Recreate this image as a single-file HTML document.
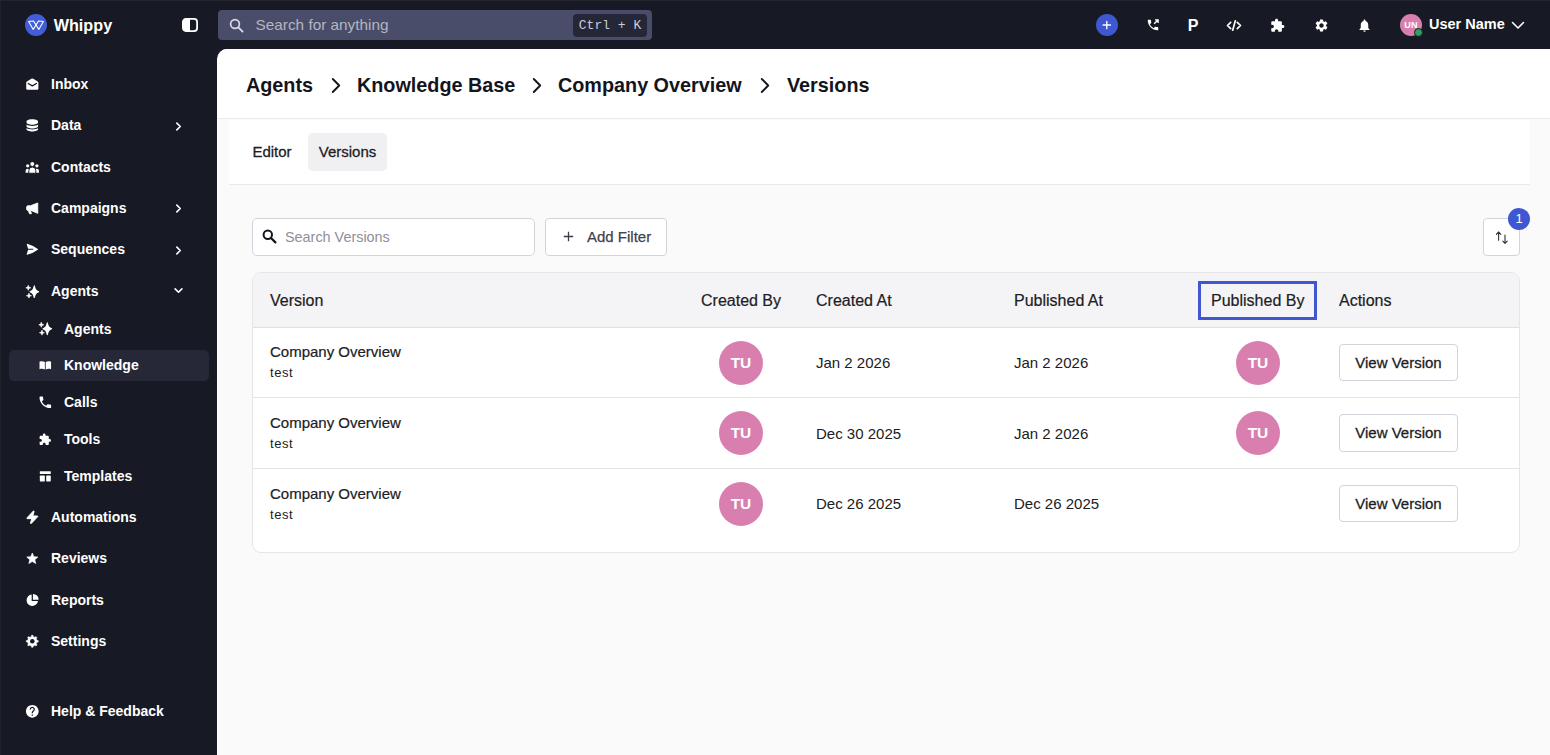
<!DOCTYPE html>
<html lang="en">
<head>
<meta charset="utf-8">
<title>Whippy - Versions</title>
<style>
*{box-sizing:border-box;margin:0;padding:0}
html,body{width:1550px;height:755px;overflow:hidden}
body{background:#171a24;font-family:"Liberation Sans",sans-serif;color:#1c2024;position:relative;-webkit-font-smoothing:antialiased}
.abs{position:absolute}
svg{display:block}
/* sidebar */
.nav{position:absolute;left:0;height:30px;display:flex;align-items:center;color:#fff;font-weight:700;font-size:14px;white-space:nowrap}
.nav .ic{position:absolute;left:25.3px;top:7.900px;width:14.600px;height:14.600px}
.nav .tx{position:absolute;left:51px;top:0;line-height:30px}
.nav.sub .ic{left:38.450px}
.nav.sub .tx{left:64px}
.nav .chev{position:absolute;left:172.800px;top:10.300px;width:11px;height:11px}
/* main */
#main{position:absolute;left:217px;top:49px;width:1333px;height:706px;background:#fafafa;border-left:1px solid #fff;border-top-left-radius:10px;overflow:hidden}
#crumbs{position:absolute;left:0;top:0;width:1332px;height:70px;background:#fff;border-bottom:1px solid #e9e9ec}
.crumb{position:absolute;top:22px;font-size:19.8px;font-weight:700;line-height:28px;color:#14151c;white-space:nowrap}
.csep{position:absolute;top:27.600px;width:12px;height:17px}
#tabs{position:absolute;left:11px;top:71px;width:1301px;height:65px;background:#fff;border-bottom:1px solid #e9e9ec}
.tab{position:absolute;top:13px;height:38px;line-height:38px;font-size:15px;font-weight:400;-webkit-text-stroke:0.280px #1c2024;color:#1c2024;text-align:center;border-radius:5px;white-space:nowrap}
.inp{position:absolute;background:#fff;border:1px solid #d3d4db;border-radius:5px}
.btn{position:absolute;background:#fff;border:1px solid #d3d4db;border-radius:4px;font-weight:400;font-size:15px;-webkit-text-stroke:0.280px #1c2024;color:#1c2024;white-space:nowrap}
#table{position:absolute;left:34px;top:223px;width:1268px;height:281px;background:#fff;border:1px solid #e6e6ea;border-radius:9px;overflow:hidden}
#thead{position:absolute;left:0;top:0;width:1266px;height:55px;background:#f4f4f6;border-bottom:1px solid #dfe0e5}
.th{position:absolute;top:1px;line-height:54px;font-size:16px;font-weight:400;color:#1c2024;white-space:nowrap;-webkit-text-stroke:0.200px #1c2024}
.row{position:absolute;left:0;width:1266px;height:70px}
.sep{position:absolute;left:0;width:1266px;height:1px;background:#e3e3e8}
.t1{position:absolute;left:17px;top:14px;font-size:15px;line-height:20px;color:#1c2024;white-space:nowrap;-webkit-text-stroke:0.200px #1c2024}
.t2{position:absolute;left:17px;top:36px;font-size:13px;line-height:18px;color:#1c2024;white-space:nowrap;letter-spacing:0.550px}
.av{position:absolute;top:12.600px;width:44px;height:44px;border-radius:50%;background:#d97fb0;color:#fff;font-weight:700;font-size:15.5px;line-height:44px;text-align:center}
.dt{position:absolute;top:24px;font-size:15px;line-height:22px;color:#1c2024;white-space:nowrap}
.vv{left:1086px;top:15.700px;width:119px;height:37.400px;line-height:35.400px;text-align:center}
</style>
</head>
<body>
<!-- ===== top bar ===== -->
<div class="abs" style="left:0;top:0;width:1550px;height:1px;background:#23252f"></div>
<div class="abs" style="left:0;top:0;width:1px;height:755px;background:#1f212c"></div>
<div class="abs" id="logo" style="left:25px;top:13.700px;width:22px;height:22px;border-radius:50%;background:#435dd6">
<svg width="22" height="22" viewBox="0 0 22 22"><path d="M3.600 7.400 L8.200 15.400 L13.500 7 L18.400 7.400 L13.800 15.400 L8.500 7 Z" fill="none" stroke="#fff" stroke-width="1.050" stroke-linejoin="round"/></svg>
</div>
<div class="abs" style="left:53.700px;top:13px;font-size:16.200px;line-height:24px;font-weight:700;color:#fff">Whippy</div>
<div class="abs" style="left:181.800px;top:17.500px;width:16px;height:14px">
<svg width="16" height="14" viewBox="0 0 16 14"><rect x="0.9" y="0.9" width="14.2" height="12.2" rx="3" fill="#171a24" stroke="#fff" stroke-width="1.8"/><path d="M3.5 0.9 H8 V13.1 H3.5 A2.6 2.6 0 0 1 0.9 10.5 V3.5 A2.6 2.6 0 0 1 3.5 0.9Z" fill="#fff"/></svg>
</div>
<div class="abs" id="gsearch" style="left:218px;top:10px;width:434px;height:30px;background:#4a4d69;border-radius:4px">
  <svg class="abs" style="left:11px;top:7.500px" width="15" height="15" viewBox="0 0 15 15"><circle cx="6" cy="6" r="4.4" fill="none" stroke="#d7d9e6" stroke-width="1.7"/><path d="M9.4 9.4 L13.6 13.6" stroke="#d7d9e6" stroke-width="1.9" stroke-linecap="round"/></svg>
  <div class="abs" style="left:37.500px;top:0;line-height:30px;font-size:15.350px;color:#b4b5c0;white-space:nowrap">Search for anything</div>
  <div class="abs" style="left:355px;top:4px;width:74px;height:23px;background:#252738;border-radius:4px;color:#c9ccda;font-family:'Liberation Mono',monospace;font-size:13px;line-height:23px;text-align:center;white-space:nowrap">Ctrl + K</div>
</div>
<!-- right icons -->
<div class="abs" style="left:1096.200px;top:13.700px;width:22px;height:22px;border-radius:50%;background:#3f57d1">
<svg width="22" height="22" viewBox="0 0 22 22"><path d="M10.800 7.300 V14.700 M7.100 11 H14.500" stroke="#fff" stroke-width="1.300" stroke-linecap="round"/></svg></div>
<svg class="abs" style="left:1146px;top:18px" width="14" height="14" viewBox="0 0 24 24"><path fill="#fff" d="M6.6 10.8c1.4 2.8 3.8 5.1 6.6 6.6l2.2-2.2c.3-.3.7-.4 1-.2 1.100.4 2.300.6 3.600.6.600 0 1 .4 1 1V20c0 .6-.4 1-1 1C10.600 21 3 13.400 3 4c0-.6.4-1 1-1h3.500c.6 0 1 .4 1 1 0 1.300.2 2.500.6 3.600.1.300 0 .7-.2 1l-2.300 2.200z"/><path d="M14 10 L20.500 3.500 M15.500 3.200 H20.800 V8.500" fill="none" stroke="#fff" stroke-width="2.300"/></svg>
<div class="abs" style="left:1186px;top:15px;width:14px;text-align:center;font-size:16px;line-height:21px;font-weight:700;color:#fff">P</div>
<svg class="abs" style="left:1226px;top:19px" width="16" height="13" viewBox="0 0 16 13"><path d="M4.700 3.300 L1.500 6.500 L4.700 9.700 M11.300 3.300 L14.500 6.500 L11.300 9.700 M9.300 1.800 L6.700 11.200" fill="none" stroke="#fff" stroke-width="1.700" stroke-linecap="round" stroke-linejoin="round"/></svg>
<svg class="abs" style="left:1270px;top:18px" width="15" height="15" viewBox="0 0 24 24"><path fill="#fff" d="M20.500 11H19V7c0-1.100-.900-2-2-2h-4V3.500C13 2.120 11.880 1 10.500 1S8 2.120 8 3.500V5H4c-1.100 0-1.990.9-1.990 2v3.800H3.500c1.490 0 2.700 1.210 2.700 2.700s-1.210 2.700-2.700 2.700H2V20c0 1.100.9 2 2 2h3.800v-1.500c0-1.490 1.210-2.700 2.700-2.700s2.700 1.210 2.700 2.700V22H17c1.100 0 2-.9 2-2v-4h1.500c1.380 0 2.500-1.120 2.500-2.500S21.880 11 20.500 11z"/></svg>
<svg class="abs" style="left:1314px;top:18px" width="15" height="15" viewBox="0 0 24 24"><path fill="#fff" d="M19.140 12.940c.04-.3.060-.61.060-.94 0-.32-.02-.64-.07-.94l2.030-1.580a.49.49 0 0 0 .12-.61l-1.920-3.320a.488.488 0 0 0-.59-.22l-2.390.96c-.5-.38-1.030-.7-1.620-.94l-.36-2.540a.484.484 0 0 0-.48-.41h-3.840c-.24 0-.43.170-.47.410l-.36 2.540c-.59.240-1.130.57-1.620.94l-2.390-.96c-.22-.08-.47 0-.59.220L2.740 8.870c-.12.210-.08.470.12.610l2.030 1.580c-.05.300-.09.630-.09.940s.02.640.07.940l-2.030 1.580a.49.49 0 0 0-.12.610l1.920 3.320c.12.220.37.290.59.220l2.390-.96c.5.380 1.030.7 1.620.94l.36 2.540c.05.240.24.410.48.410h3.840c.24 0 .44-.17.470-.41l.36-2.540c.59-.24 1.130-.56 1.620-.94l2.390.96c.22.080.47 0 .59-.22l1.920-3.320c.12-.22.070-.47-.12-.61l-2.010-1.580zM12 15.600c-1.980 0-3.600-1.620-3.600-3.600s1.620-3.600 3.600-3.600 3.600 1.620 3.600 3.600-1.620 3.600-3.600 3.600z"/></svg>
<svg class="abs" style="left:1357px;top:18px" width="15" height="15" viewBox="0 0 24 24"><path fill="#fff" d="M12 22c1.100 0 2-.9 2-2h-4c0 1.100.89 2 2 2zm6-6v-5c0-3.070-1.640-5.640-4.500-6.320V4c0-.83-.67-1.500-1.500-1.500s-1.500.67-1.500 1.500v.68C7.630 5.360 6 7.920 6 11v5l-2 2v1h16v-1l-2-2z"/></svg>
<div class="abs" style="left:1400px;top:14px;width:22px;height:22px;border-radius:50%;background:#d97fb0;color:#fff;font-size:9px;font-weight:700;line-height:22px;text-align:center;letter-spacing:0.2px">UN</div>
<div class="abs" style="left:1414px;top:28px;width:9px;height:9px;border-radius:50%;background:#2f9e62;border:1px solid #171a24"></div>
<div class="abs" style="left:1429px;top:13px;font-size:14.5px;line-height:22px;font-weight:700;color:#fff;white-space:nowrap">User Name</div>
<svg class="abs" style="left:1511px;top:21px" width="14" height="9" viewBox="0 0 14 9"><path d="M1.500 1.500 L7 7 L12.500 1.500" fill="none" stroke="#fff" stroke-width="1.600" stroke-linecap="round" stroke-linejoin="round"/></svg>

<!-- ===== sidebar ===== -->
<div id="sidebar">
<div class="nav" style="top:69px"><svg class="ic" viewBox="0 0 24 24"><path fill="#fff" d="M12 2.400 Q12.800 2.400 13.600 2.900 L20.800 7.600 Q22 8.400 22 9.800 V19 Q22 21 20 21 H4 Q2 21 2 19 V9.800 Q2 8.400 3.200 7.600 L10.400 2.900 Q11.200 2.400 12 2.400 Z"/><path d="M5.200 10.600 L12 14.600 L18.800 10.600" fill="none" stroke="#171a24" stroke-width="2" stroke-linecap="round" stroke-linejoin="round"/></svg><span class="tx">Inbox</span></div>
<div class="nav" style="top:110.3px"><svg class="ic" viewBox="0 0 24 24"><path fill="#fff" d="M12 2C6.750 2 2.500 3.600 2.500 5.600v1.800C2.500 9.400 6.750 11 12 11s9.500-1.600 9.500-3.600V5.600C21.500 3.600 17.250 2 12 2z M2.500 10.600v2.900c0 2 4.250 3.600 9.500 3.600s9.500-1.600 9.500-3.600v-2.900c-1.900 1.600-5.500 2.400-9.500 2.400s-7.600-.8-9.500-2.400z M2.500 16.500v2c0 2 4.250 3.600 9.500 3.600s9.500-1.600 9.500-3.600v-2c-1.900 1.600-5.500 2.400-9.500 2.400s-7.600-.8-9.500-2.400z"/></svg><span class="tx">Data</span><svg class="chev" viewBox="0 0 12 12"><path d="M4.200 2.400 L7.900 6 L4.200 9.600" fill="none" stroke="#fff" stroke-width="1.800" stroke-linecap="round" stroke-linejoin="round"/></svg></div>
<div class="nav" style="top:151.7px"><svg class="ic" viewBox="0 0 24 24"><circle cx="4.400" cy="9.600" r="2.700" fill="#fff"/><circle cx="19.600" cy="9.600" r="2.700" fill="#fff"/><path fill="#fff" d="M1 21 V17.800 a3.600 3.600 0 0 1 7.200 0 V21 Z M23 21 V17.800 a3.600 3.600 0 0 0 -7.200 0 V21 Z"/><path fill="#fff" stroke="#171a24" stroke-width="1.600" d="M6.200 21.800 V17.400 a5.800 5.800 0 0 1 11.600 0 V21.800 Z"/><circle cx="12" cy="6.600" r="3.900" fill="#fff" stroke="#171a24" stroke-width="1.200"/></svg><span class="tx">Contacts</span></div>
<div class="nav" style="top:193px"><svg class="ic" viewBox="0 0 24 24"><path fill="#fff" stroke="#fff" stroke-width="1.400" stroke-linejoin="round" d="M21 3.200 L9 7.800 H5 C3.700 7.800 2.700 8.800 2.700 10.100 v3.300 c0 1.300 1 2.300 2.300 2.300 h.6 l1.700 5.200 h3.300 l-1.600 -5.200 h1 L21 20.300 z"/></svg><span class="tx">Campaigns</span><svg class="chev" viewBox="0 0 12 12"><path d="M4.200 2.400 L7.900 6 L4.200 9.600" fill="none" stroke="#fff" stroke-width="1.800" stroke-linecap="round" stroke-linejoin="round"/></svg></div>
<div class="nav" style="top:234.4px"><svg class="ic" viewBox="-0.4 -0.7 25.4 25.4"><path fill="#fff" d="M3.478 2.404a.75.75 0 0 0-.926.941l2.432 7.905H13.500a.75.75 0 0 1 0 1.500H4.984l-2.432 7.905a.75.75 0 0 0 .926.940 60.519 60.519 0 0 0 18.445-8.986.75.75 0 0 0 0-1.218A60.517 60.517 0 0 0 3.478 2.404Z"/></svg><span class="tx">Sequences</span><svg class="chev" viewBox="0 0 12 12"><path d="M4.200 2.400 L7.900 6 L4.200 9.600" fill="none" stroke="#fff" stroke-width="1.800" stroke-linecap="round" stroke-linejoin="round"/></svg></div>
<div class="nav" style="top:275.7px"><svg class="ic" viewBox="0 0 24 24"><path fill="#fff" stroke="#fff" stroke-width="1.800" stroke-linejoin="round" d="M15.300 3 C16.200 8.300 18.500 11.700 22.400 12.800 C18.500 13.900 16.200 17.300 15.300 22.600 C14.400 17.300 12.100 13.900 8.200 12.800 C12.100 11.700 14.400 8.300 15.300 3 Z"/><path fill="#fff" stroke="#fff" stroke-width="1.300" stroke-linejoin="round" d="M5.400 2.250 C5.700 4.500 7.100 5.900 9.400 6.250 C7.100 6.600 5.700 8 5.400 10.250 C5.100 8 3.700 6.600 1.400 6.250 C3.700 5.900 5.100 4.500 5.400 2.250 Z M6.500 15.200 C6.800 17.450 8.200 18.850 10.500 19.200 C8.200 19.550 6.800 20.950 6.500 23.200 C6.200 20.950 4.800 19.550 2.500 19.200 C4.800 18.850 6.200 17.450 6.500 15.200 Z"/></svg><span class="tx">Agents</span><svg class="chev" style="top:9.800px;left:173.400px" viewBox="0 0 12 12"><path d="M2.300 4.300 L6 7.900 L9.700 4.300" fill="none" stroke="#fff" stroke-width="1.800" stroke-linecap="round" stroke-linejoin="round"/></svg></div>
<div class="nav sub" style="top:313.5px"><svg class="ic" viewBox="0 0 24 24"><path fill="#fff" stroke="#fff" stroke-width="1.800" stroke-linejoin="round" d="M15.300 3 C16.200 8.300 18.500 11.700 22.400 12.800 C18.500 13.900 16.200 17.300 15.300 22.600 C14.400 17.300 12.100 13.900 8.200 12.800 C12.100 11.700 14.400 8.300 15.300 3 Z"/><path fill="#fff" stroke="#fff" stroke-width="1.300" stroke-linejoin="round" d="M5.400 2.250 C5.700 4.500 7.100 5.900 9.400 6.250 C7.100 6.600 5.700 8 5.400 10.250 C5.100 8 3.700 6.600 1.400 6.250 C3.700 5.900 5.100 4.500 5.400 2.250 Z M6.500 15.200 C6.800 17.450 8.200 18.850 10.500 19.200 C8.200 19.550 6.800 20.950 6.500 23.200 C6.200 20.950 4.800 19.550 2.500 19.200 C4.800 18.850 6.200 17.450 6.500 15.200 Z"/></svg><span class="tx">Agents</span></div>
<div class="abs" style="left:9px;top:350px;width:200px;height:31px;border-radius:5px;background:#262838"></div>
<div class="nav sub" style="top:350.4px"><svg class="ic" viewBox="0 0 24 24"><path fill="#fff" d="M2.500 6 C5.500 4.800 8.700 5 11.300 6.600 V18.900 C8.700 17.400 5.500 17.200 2.500 18.300 Z M21.500 6 C18.500 4.800 15.300 5 12.700 6.600 V18.900 C15.300 17.400 18.500 17.200 21.500 18.300 Z"/></svg><span class="tx">Knowledge</span></div>
<div class="nav sub" style="top:387px"><svg class="ic" viewBox="0.650 0.650 22.700 22.700"><path fill="#fff" d="M6.620 10.790c1.440 2.830 3.760 5.140 6.590 6.590l2.200-2.200c.27-.27.670-.36 1.020-.24 1.120.37 2.330.57 3.570.57.550 0 1 .45 1 1V20c0 .55-.45 1-1 1-9.390 0-17-7.610-17-17 0-.55.45-1 1-1h3.500c.55 0 1 .45 1 1 0 1.250.2 2.450.57 3.570.11.350.03.740-.25 1.020l-2.200 2.200z"/></svg><span class="tx">Calls</span></div>
<div class="nav sub" style="top:424px"><svg class="ic" viewBox="-1 -2 27 27"><path fill="#fff" d="M20.500 11H19V7c0-1.100-.900-2-2-2h-4V3.500C13 2.120 11.880 1 10.500 1S8 2.120 8 3.500V5H4c-1.100 0-1.990.9-1.990 2v3.800H3.500c1.490 0 2.700 1.210 2.700 2.700s-1.210 2.700-2.700 2.700H2V20c0 1.100.9 2 2 2h3.800v-1.500c0-1.490 1.210-2.700 2.700-2.700s2.700 1.210 2.700 2.700V22H17c1.100 0 2-.9 2-2v-4h1.500c1.380 0 2.500-1.120 2.500-2.500S21.880 11 20.500 11z"/></svg><span class="tx">Tools</span></div>
<div class="nav sub" style="top:461px"><svg class="ic" viewBox="0 0 24 24"><rect x="3" y="3.500" width="18" height="4.800" rx="1" fill="#fff"/><rect x="3" y="10.800" width="8.200" height="9.700" rx="1" fill="#fff"/><rect x="13.500" y="10.800" width="7.500" height="9.700" rx="1" fill="#fff"/></svg><span class="tx">Templates</span></div>
<div class="nav" style="top:502px"><svg class="ic" viewBox="0 0 24 24"><path fill="#fff" stroke="#fff" stroke-width="1.500" stroke-linejoin="round" d="M14.615 1.595a.75.75 0 0 1 .359.852L12.982 9.750h7.268a.75.75 0 0 1 .548 1.262l-10.500 11.250a.75.75 0 0 1-1.272-.710l1.992-7.302H3.750a.75.75 0 0 1-.548-1.262l10.500-11.250a.75.75 0 0 1 .913-.143Z"/></svg><span class="tx">Automations</span></div>
<div class="nav" style="top:543.4px"><svg class="ic" viewBox="-1.200 -1.700 26.400 26.400"><path fill="#fff" stroke="#fff" stroke-width="1.200" stroke-linejoin="round" d="M12 17.270 18.180 21l-1.640-7.030L22 9.240l-7.190-.61L12 2 9.190 8.630 2 9.240l5.460 4.730L5.820 21z"/></svg><span class="tx">Reviews</span></div>
<div class="nav" style="top:584.8px"><svg class="ic" viewBox="0.500 0.500 23 23"><path fill="#fff" d="M11 3.050 A9 9 0 1 0 20.950 13 H11 Z M13 2 V11 H22 A9 9 0 0 0 13 2 Z"/></svg><span class="tx">Reports</span></div>
<div class="nav" style="top:626px"><svg class="ic" viewBox="-0.500 -0.500 25 25"><path fill="#fff" stroke="#fff" stroke-width="0.800" stroke-linejoin="round" d="M10.30 4.08 L10.63 1.79 L13.37 1.79 L13.70 4.08 L16.39 5.20 L18.25 3.81 L20.19 5.75 L18.80 7.61 L19.92 10.30 L22.21 10.63 L22.21 13.37 L19.92 13.70 L18.80 16.39 L20.19 18.25 L18.25 20.19 L16.39 18.80 L13.70 19.92 L13.37 22.21 L10.63 22.21 L10.30 19.92 L7.61 18.80 L5.75 20.19 L3.81 18.25 L5.20 16.39 L4.08 13.70 L1.79 13.37 L1.79 10.63 L4.08 10.30 L5.20 7.61 L3.81 5.75 L5.75 3.81 L7.61 5.20 Z"/><circle cx="12" cy="12" r="3.900" fill="#171a24"/></svg><span class="tx">Settings</span></div>
<div class="nav" style="top:696.2px"><svg class="ic" viewBox="0.500 0.500 23 23"><path fill="#fff" d="M12 2C6.480 2 2 6.480 2 12s4.480 10 10 10 10-4.480 10-10S17.520 2 12 2zm1 17h-2v-2h2v2zm2.070-7.750-.9.920C13.450 12.900 13 13.500 13 15h-2v-.5c0-1.100.45-2.100 1.170-2.830l1.240-1.260c.37-.36.590-.86.590-1.410 0-1.100-.9-2-2-2s-2 .9-2 2H8c0-2.210 1.790-4 4-4s4 1.790 4 4c0 .88-.36 1.680-.93 2.250z"/></svg><span class="tx">Help &amp; Feedback</span></div>
</div>

<!-- ===== main ===== -->
<div id="main">
  <div id="crumbs">
    <div class="crumb" style="left:28px">Agents</div>
    <svg class="csep" style="left:112px" viewBox="0 0 12 17"><path d="M2.800 2 L9.200 8.500 L2.800 15" fill="none" stroke="#14151c" stroke-width="1.900" stroke-linecap="round" stroke-linejoin="round"/></svg>
    <div class="crumb" style="left:139px">Knowledge Base</div>
    <svg class="csep" style="left:313px" viewBox="0 0 12 17"><path d="M2.800 2 L9.200 8.500 L2.800 15" fill="none" stroke="#14151c" stroke-width="1.900" stroke-linecap="round" stroke-linejoin="round"/></svg>
    <div class="crumb" style="left:340px">Company Overview</div>
    <svg class="csep" style="left:541px" viewBox="0 0 12 17"><path d="M2.800 2 L9.200 8.500 L2.800 15" fill="none" stroke="#14151c" stroke-width="1.900" stroke-linecap="round" stroke-linejoin="round"/></svg>
    <div class="crumb" style="left:569px">Versions</div>
  </div>
  <div id="tabs">
    <div class="tab" style="left:12px;width:62px">Editor</div>
    <div class="tab" style="left:79px;width:79px;background:#f0f0f3">Versions</div>
  </div>

  <div class="inp" style="left:34px;top:169px;width:283px;height:38px">
    <svg class="abs" style="left:9px;top:10px" width="15" height="15" viewBox="0 0 15 15"><circle cx="5.800" cy="5.800" r="4.200" fill="none" stroke="#14151c" stroke-width="2"/><path d="M9 9 L13.400 13.400" stroke="#14151c" stroke-width="2.200" stroke-linecap="round"/></svg>
    <div class="abs" style="left:32px;top:0;line-height:36px;font-size:14.400px;color:#8d8f9b;white-space:nowrap">Search Versions</div>
  </div>
  <div class="btn" style="left:327px;top:169px;width:122px;height:38px;line-height:36px">
    <svg class="abs" style="left:17px;top:12px" width="11" height="11" viewBox="0 0 11 11"><path d="M5.500 0.800 V10.200 M0.800 5.500 H10.200" stroke="#3a3c48" stroke-width="1.300"/></svg>
    <span class="abs" style="left:41px;top:0;color:#40424e;-webkit-text-stroke:0.250px #40424e">Add Filter</span>
  </div>
  <div class="btn" style="left:1265px;top:169px;width:37px;height:38px">
    <svg class="abs" style="left:11px;top:12px" width="14" height="14" viewBox="0 0 14 14"><path d="M3.600 9.300 V1.200 M1.400 3.300 L3.600 1 L5.800 3.300 M10 4 V12.200 M7.800 10.100 L10 12.400 L12.200 10.100" fill="none" stroke="#30323c" stroke-width="1.100" stroke-linecap="round" stroke-linejoin="round"/></svg>
  </div>
  <div class="abs" style="left:1290px;top:159px;width:22px;height:22px;border-radius:50%;background:#3f57d1;color:#fff;font-size:13px;line-height:22px;text-align:center">1</div>

  <div id="table">
    <div id="thead">
      <div class="th" style="left:17px">Version</div>
      <div class="th" style="left:448px">Created By</div>
      <div class="th" style="left:563px">Created At</div>
      <div class="th" style="left:761px">Published At</div>
      <div class="abs" style="left:945px;top:8px;width:119px;height:39px;border:3px solid #3f57d1"></div>
      <div class="th" style="left:958px">Published By</div>
      <div class="th" style="left:1086px">Actions</div>
    </div>
    <div class="sep" style="top:124px"></div>
    <div class="sep" style="top:195px"></div>
    <div class="row" style="top:55.00px">
      <div class="t1">Company Overview</div><div class="t2">test</div>
      <div class="av" style="left:466px">TU</div>
      <div class="dt" style="left:563px">Jan 2 2026</div>
      <div class="dt" style="left:761px">Jan 2 2026</div>
      <div class="av" style="left:983px">TU</div>
      <div class="btn vv">View Version</div>
    </div>
    <div class="row" style="top:125.67px">
      <div class="t1">Company Overview</div><div class="t2">test</div>
      <div class="av" style="left:466px">TU</div>
      <div class="dt" style="left:563px">Dec 30 2025</div>
      <div class="dt" style="left:761px">Jan 2 2026</div>
      <div class="av" style="left:983px">TU</div>
      <div class="btn vv">View Version</div>
    </div>
    <div class="row" style="top:196.34px">
      <div class="t1" style="top:14.500px">Company Overview</div><div class="t2" style="top:36.500px">test</div>
      <div class="av" style="left:466px">TU</div>
      <div class="dt" style="left:563px">Dec 26 2025</div>
      <div class="dt" style="left:761px">Dec 26 2025</div>
      <div class="btn vv">View Version</div>
    </div>
  </div>
</div>
</body>
</html>
